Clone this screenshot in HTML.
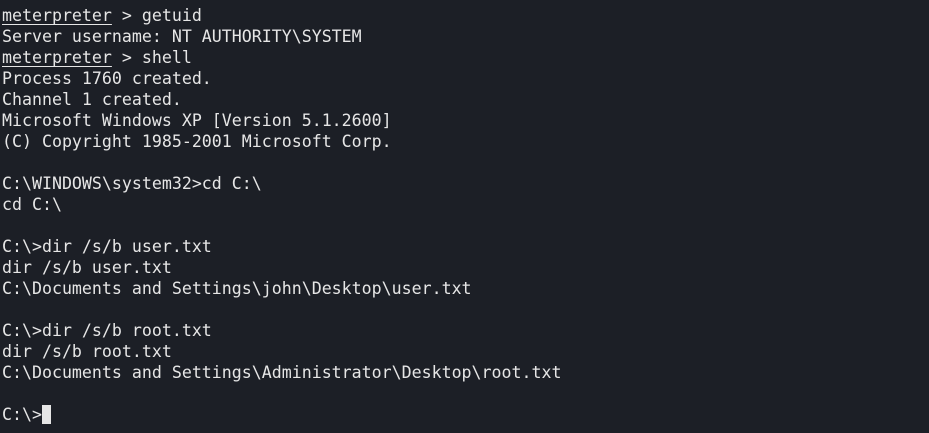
<!DOCTYPE html>
<html><head><style>
html,body{margin:0;padding:0;background:#1c1f26;width:929px;height:433px;overflow:hidden}
pre{margin:0;padding:5px 0 0 2px;font-family:"DejaVu Sans Mono","Liberation Mono",monospace;font-size:16.6px;line-height:21px;color:#e6e6e6}
u{text-decoration:underline;text-underline-offset:3px}
.c{display:inline-block;width:9px;height:19px;background:#e6e6e6;vertical-align:-4px}
</style></head><body><pre><u>meterpreter</u> &gt; getuid
Server username: NT AUTHORITY\SYSTEM
<u>meterpreter</u> &gt; shell
Process 1760 created.
Channel 1 created.
Microsoft Windows XP [Version 5.1.2600]
(C) Copyright 1985-2001 Microsoft Corp.

C:\WINDOWS\system32&gt;cd C:\
cd C:\

C:\&gt;dir /s/b user.txt
dir /s/b user.txt
C:\Documents and Settings\john\Desktop\user.txt

C:\&gt;dir /s/b root.txt
dir /s/b root.txt
C:\Documents and Settings\Administrator\Desktop\root.txt

C:\&gt;<span class="c"></span></pre></body></html>
